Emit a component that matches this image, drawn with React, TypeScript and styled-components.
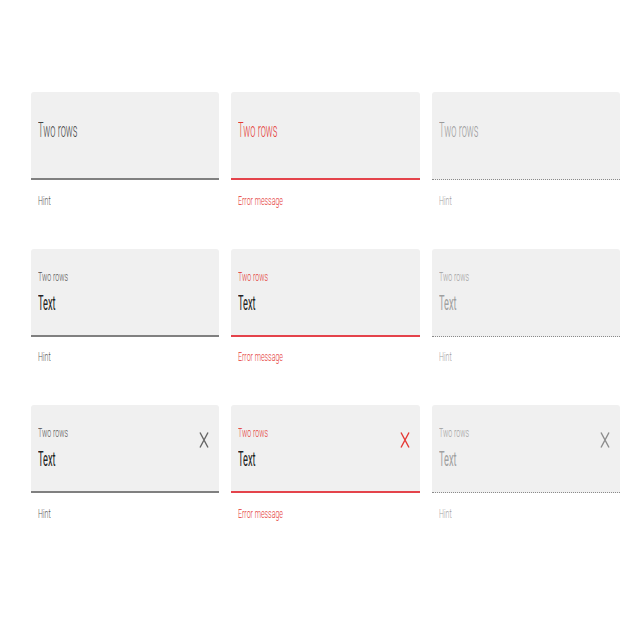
import React from "react";
import styled, { createGlobalStyle, css } from "styled-components";

const Global = createGlobalStyle`
  html, body { margin: 0; padding: 0; background: #fff; }
  body { font-family: Roboto, "Liberation Sans", sans-serif; }
`;

type Variant = "normal" | "error" | "disabled";

const RED = "#e53935";

const Page = styled.div`
  padding: 92px 20px 0 31px;
  width: 640px;
  box-sizing: border-box;
`;

const Grid = styled.div`
  display: grid;
  grid-template-columns: repeat(3, 1fr);
  column-gap: 12px;
  row-gap: 40px;
`;

const Field = styled.div`
  display: flex;
  flex-direction: column;
`;

const Box = styled.div<{ $v: Variant }>`
  height: 88px;
  box-sizing: border-box;
  background: #f0f0f0;
  border-radius: 3px 3px 0 0;
  display: flex;
  align-items: flex-start;
  padding: 0 10px 0 7px;
  ${(p) =>
    p.$v === "disabled"
      ? css`border-bottom: 1px dotted #8a8a8a;`
      : css`border-bottom: 2px solid ${p.$v === "error" ? "#e4434b" : "#808080"};`}
`;

const Content = styled.div<{ $two: boolean }>`
  flex: 1;
  display: flex;
  flex-direction: column;
  padding-top: ${(p) => (p.$two ? "20px" : "26px")};
  overflow: hidden;
`;

const Squish = styled.span<{ $scale: number }>`
  display: inline-block;
  white-space: nowrap;
  transform: scaleX(${(p) => p.$scale});
  transform-origin: left center;
`;

const Placeholder = styled.div<{ $v: Variant }>`
  font-size: 21px;
  line-height: 24px;
  font-weight: 300;
  color: ${(p) => (p.$v === "error" ? RED : p.$v === "disabled" ? "#9a9a9a" : "#444")};
`;

const Label = styled.div<{ $v: Variant }>`
  font-size: 13px;
  line-height: 16px;
  font-weight: 300;
  color: ${(p) => (p.$v === "error" ? RED : p.$v === "disabled" ? "#a0a0a0" : "#555")};
`;

const Value = styled.div<{ $v: Variant }>`
  margin-top: 6px;
  font-size: 21px;
  line-height: 24px;
  color: ${(p) => (p.$v === "disabled" ? "#a0a0a0" : "#222")};
`;

const Clear = styled.svg`
  margin-top: 27px;
  flex: none;
`;

const Hint = styled.div<{ $v: Variant }>`
  margin-top: 12.5px;
  padding-left: 7px;
  font-size: 13px;
  line-height: 16px;
  font-weight: 300;
  color: ${(p) => (p.$v === "error" ? RED : p.$v === "disabled" ? "#a0a0a0" : "#555")};
`;

const BIG = 0.44;
const SMALL = 0.54;

const ClearIcon = ({ v }: { v: Variant }) => {
  const c = v === "error" ? RED : v === "disabled" ? "#8c8c8c" : "#666";
  return (
    <Clear width="10" height="16" viewBox="0 0 10 16">
      <path d="M1 0.5 L9 15.5 M9 0.5 L1 15.5" stroke={c} strokeWidth="1.4" fill="none" />
    </Clear>
  );
};

const Cell = ({ v, kind }: { v: Variant; kind: 1 | 2 | 3 }) => (
  <Field>
    <Box $v={v}>
      <Content $two={kind !== 1}>
        {kind === 1 ? (
          <Placeholder $v={v}>
            <Squish $scale={BIG}>Two rows</Squish>
          </Placeholder>
        ) : (
          <>
            <Label $v={v}>
              <Squish $scale={SMALL}>Two rows</Squish>
            </Label>
            <Value $v={v}>
              <Squish $scale={BIG}>Text</Squish>
            </Value>
          </>
        )}
      </Content>
      {kind === 3 && <ClearIcon v={v} />}
    </Box>
    <Hint $v={v}>
      <Squish $scale={SMALL}>{v === "error" ? "Error message" : "Hint"}</Squish>
    </Hint>
  </Field>
);

export default function App() {
  const variants: Variant[] = ["normal", "error", "disabled"];
  const kinds: (1 | 2 | 3)[] = [1, 2, 3];
  return (
    <>
      <Global />
      <Page>
        <Grid>
          {kinds.map((k) =>
            variants.map((v) => <Cell key={`${k}-${v}`} v={v} kind={k} />)
          )}
        </Grid>
      </Page>
    </>
  );
}
